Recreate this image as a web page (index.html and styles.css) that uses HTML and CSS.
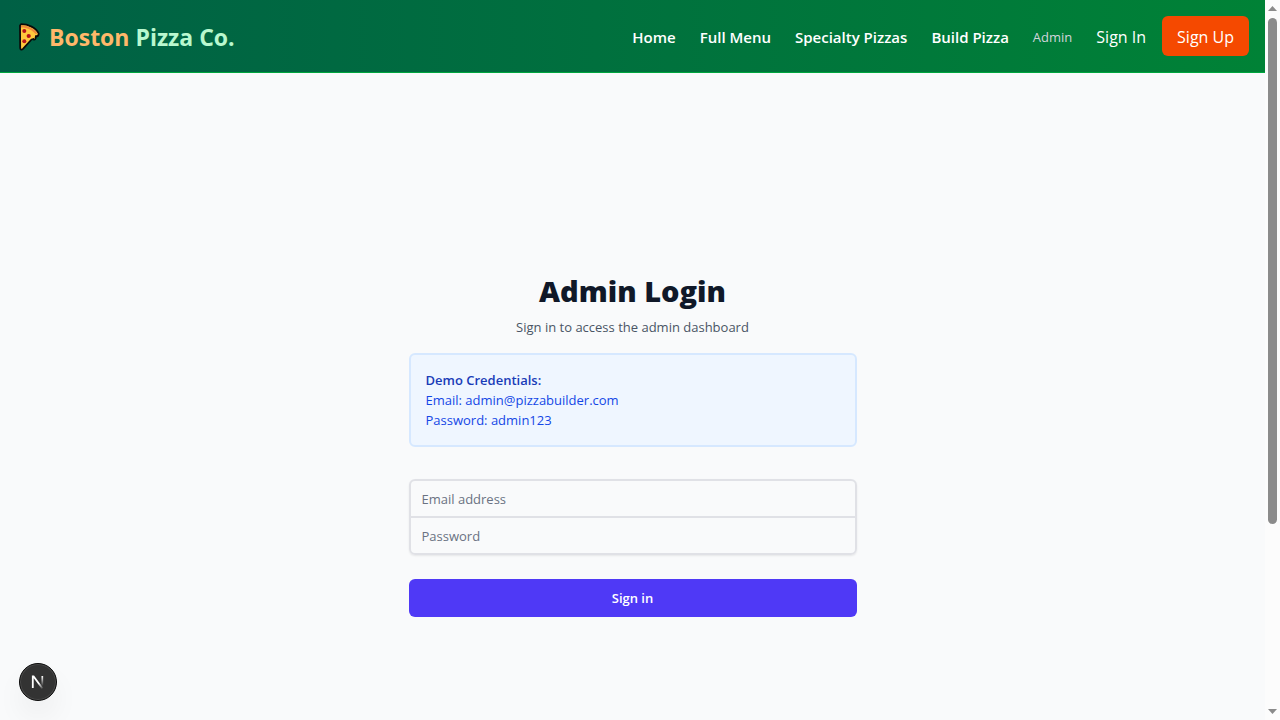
FILE: index.html
```html
<!DOCTYPE html>
<html lang="en">
<head>
<meta charset="utf-8">
<meta name="viewport" content="width=device-width, initial-scale=1">
<title>Admin Login - Boston Pizza Co.</title>
<link rel="stylesheet" href="styles.css">
</head>
<body>
<div class="page">
  <header class="site-header">
    <a class="brand" href="#">
      <svg class="brand-icon" viewBox="0 0 26 32" aria-hidden="true">
        <g transform="translate(0 1)">
          <path d="M5 3.200C12 3.200 20 6.500 22.700 12.500L22.200 14.500C21.200 15.500 20.500 15.300 20 15L19.500 17.500C19 19 17.500 19 17.300 18L15.500 18.500L7 27.800C5.500 29.200 4.200 28.700 4.200 27L4 4.500Z" fill="#ffc83d" stroke="#0a0a0a" stroke-width="1.800" stroke-linejoin="round"/>
          <path d="M5 4.500C12 4.300 18.500 7.500 21.500 12.600L19.500 13C16 8.800 11 6.600 5 6.600Z" fill="#f08a3c"/>
          <circle cx="8.300" cy="10" r="2" fill="#b5121b"/>
          <circle cx="12.700" cy="15" r="2.100" fill="#b5121b"/>
          <circle cx="8.300" cy="20.200" r="2" fill="#b5121b"/>
        </g>
      </svg>
      <span class="brand-name"><span class="brand-accent">Boston</span> Pizza Co.</span>
    </a>
    <nav class="nav" aria-label="Main">
      <a class="nav-link" href="#">Home</a>
      <a class="nav-link" href="#">Full Menu</a>
      <a class="nav-link" href="#">Specialty Pizzas</a>
      <a class="nav-link" href="#">Build Pizza</a>
      <a class="nav-admin" href="#">Admin</a>
      <div class="nav-auth">
        <a class="nav-signin" href="#">Sign In</a>
        <a class="nav-signup" href="#">Sign Up</a>
      </div>
    </nav>
  </header>
  <main class="main">
    <div class="login">
      <h1 class="title">Admin Login</h1>
      <p class="subtitle">Sign in to access the admin dashboard</p>
      <section class="demo">
        <p class="demo-title">Demo Credentials:</p>
        <p>Email: admin@pizzabuilder.com</p>
        <p>Password: admin123</p>
      </section>
      <form class="form">
        <div class="fields">
          <input class="field" type="email" placeholder="Email address" aria-label="Email address">
          <input class="field" type="password" placeholder="Password" aria-label="Password">
        </div>
        <button class="submit" type="button">Sign in</button>
      </form>
    </div>
  </main>
</div>
<div class="scrollbar" aria-hidden="true">
  <svg class="scroll-arrow" viewBox="0 0 9 5"><path d="M4.500 0L9 5H0Z" fill="#8b8b8b"/></svg>
  <div class="scroll-track"><div class="scroll-thumb"></div></div>
  <svg class="scroll-arrow" viewBox="0 0 9 5"><path d="M0 0H9L4.500 5Z" fill="#8b8b8b"/></svg>
</div>
<button class="dev-badge" type="button" aria-label="Developer tools">
  <svg class="dev-icon" viewBox="0 0 14 14" fill="none" aria-hidden="true">
    <defs>
      <linearGradient id="fade-a" x1="6" y1="6" x2="12" y2="14" gradientUnits="userSpaceOnUse"><stop offset="0.300" stop-color="#fff"/><stop offset="1" stop-color="#fff" stop-opacity="0"/></linearGradient>
      <linearGradient id="fade-b" x1="0" y1="1" x2="0" y2="11" gradientUnits="userSpaceOnUse"><stop stop-color="#fff"/><stop offset="1" stop-color="#fff" stop-opacity="0"/></linearGradient>
    </defs>
    <path d="M1.800 13V1.500H2.600L11.500 13.500" stroke="url(#fade-a)" stroke-width="1.800"/>
    <path d="M11.300 1V11" stroke="url(#fade-b)" stroke-width="1.700"/>
  </svg>
</button>
</body>
</html>
```
FILE: styles.css
```css
*, *::before, *::after { box-sizing: border-box; }
body {
  margin: 0;
  height: 100vh;
  display: flex;
  overflow: hidden;
  background: #f9fafb;
  font-family: "Segoe UI", "Open Sans", "Noto Sans", sans-serif;
  font-size: 15px;
  line-height: 24px;
}
h1, p { margin: 0; }
a { color: inherit; text-decoration: none; }
button, input { font: inherit; }
.page {
  flex: 1;
  min-width: 0;
  height: 100vh;
  overflow: hidden;
  background: #f9fafb;
}
.site-header {
  display: flex;
  align-items: center;
  justify-content: space-between;
  padding: 16px;
  border-bottom: 1px solid #00a63e;
  background: linear-gradient(to right, #006045, #008236);
  color: #fff;
}
.brand { display: flex; align-items: center; gap: 7px; }
.brand-icon { width: 26px; height: 32px; }
.brand-name {
  padding-top: 2px;
  font-size: 23px;
  line-height: 32px;
  font-weight: 700;
  color: #b9f8cf;
}
.brand-accent { color: #ffb86a; }
.nav { display: flex; align-items: center; gap: 24px; }
.nav-link, .nav-admin, .nav-signin { padding-top: 2px; }
.nav-link { font-weight: 600; }
.nav-admin { font-size: 13px; color: #d1d5dc; }
.nav-auth { display: flex; align-items: center; gap: 16px; font-size: 16px; }
.nav-signup {
  padding: 9px 15px 7px;
  border-radius: 6px;
  background: #f54900;
}
.main {
  display: flex;
  align-items: center;
  justify-content: center;
  min-height: 100vh;
  padding: 48px 32px;
}
.login { width: 100%; max-width: 448px; }
.title {
  margin-top: 24px;
  font-size: 29px;
  line-height: 36px;
  font-weight: 800;
  text-align: center;
  color: #101828;
}
.subtitle {
  margin-top: 8px;
  font-size: 13px;
  line-height: 20px;
  text-align: center;
  color: #4a5565;
}
.demo {
  margin-top: 16px;
  padding: 15px;
  border: 2px solid #d6e8ff;
  border-radius: 6px;
  background: #eff6ff;
  font-size: 13px;
  line-height: 20px;
  color: #1447e6;
}
.demo-title { font-weight: 600; color: #193cb8; }
.form { margin-top: 32px; }
.fields {
  border-radius: 6px;
  box-shadow: 0 1px 2px rgba(0, 0, 0, 0.08);
}
.field {
  display: block;
  width: 100%;
  height: 39px;
  padding: 7px 11px;
  border: 2px solid #e0e1e6;
  border-radius: 6px 6px 0 0;
  background: #f9fafb;
  font-size: 13px;
  line-height: 20px;
  color: #101828;
}
.field + .field { margin-top: -2px; border-radius: 0 0 6px 6px; }
.field::placeholder { color: #6a7282; opacity: 1; }
.submit {
  display: block;
  width: 100%;
  margin-top: 24px;
  padding: 9px 16px;
  border: 0;
  border-radius: 6px;
  background: #4f39f6;
  font-size: 13px;
  line-height: 20px;
  font-weight: 600;
  color: #fff;
}
.scrollbar {
  display: flex;
  flex-direction: column;
  align-items: center;
  width: 15px;
  padding: 6px 0;
  background: #fcfcfc;
}
.scroll-arrow { width: 9px; height: 5px; }
.scroll-track { flex: 1; width: 9px; padding: 7px 0; }
.scroll-thumb { height: 74%; border-radius: 5px; background: #8b8b8b; }
.dev-badge {
  position: fixed;
  left: 19px;
  bottom: 19px;
  display: flex;
  align-items: center;
  justify-content: center;
  width: 38px;
  height: 38px;
  padding: 0;
  border: 1px solid #0a0a0a;
  border-radius: 50%;
  background: #333;
  box-shadow: inset 0 0 0 1px #4a4a4a, 0 16px 32px -8px rgba(0, 0, 0, 0.14);
}
.dev-icon { width: 14px; height: 14px; }
```
